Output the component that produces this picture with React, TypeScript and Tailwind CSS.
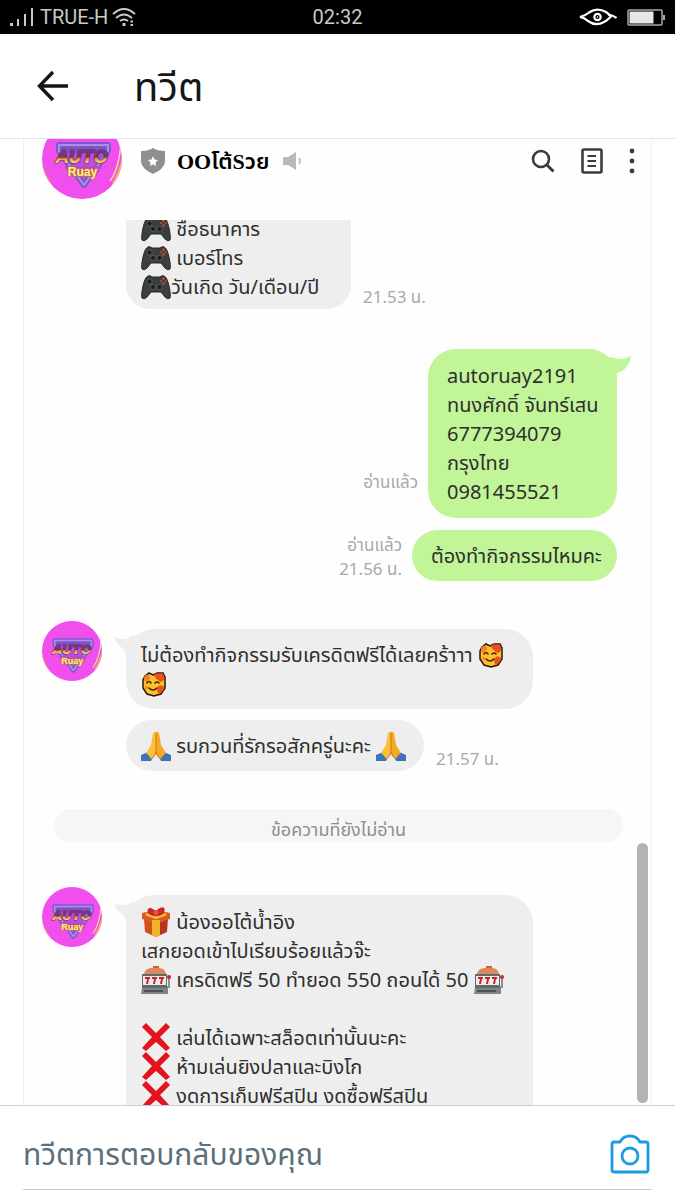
import type { ReactNode } from "react";

function Avatar({ id, className }: { id: string; className: string }) {
  return (
    <svg viewBox="0 0 80 80" className={className} role="img" aria-label="Auto Ruay">
      <defs>
        <clipPath id={`${id}-clip`}>
          <circle cx="40" cy="40" r="40" />
        </clipPath>
        <linearGradient id={`${id}-gold`} x1="0" y1="0" x2="0" y2="1">
          <stop offset="0.3" stopColor="#6a3a8c" />
          <stop offset="0.5" stopColor="#7a3a3c" />
          <stop offset="0.6" stopColor="#f0a04a" />
          <stop offset="0.85" stopColor="#ffe08a" />
        </linearGradient>
      </defs>
      <g clipPath={`url(#${id}-clip)`}>
        <rect width="80" height="80" fill="#f04fee" />
        <path d="M-2 38Q1 52 9 64L-4 62Z" fill="#e8a850" />
        <path d="M83 22Q79 50 70 64L76 64L84 50Z" fill="#f2b45c" />
        <path d="M79 24Q77 50 68 62" fill="none" stroke="#fbd79a" strokeWidth="1.5" />
        <path d="M17 26H66V32L42 66L17 32Z" fill="#c04be0" stroke="#8058cc" strokeWidth="6" strokeLinejoin="round" />
        <path d="M17 26H66V32L42 66L17 32Z" fill="none" stroke="#a294ea" strokeWidth="2" strokeLinejoin="round" />
        <rect x="20" y="28" width="43" height="6" fill="#8a4cc4" />
        <path d="M22 47H60L54 58H30Z" fill="#b848d0" />
        <text x="40" y="44" textAnchor="middle" fontFamily="DejaVu Sans, sans-serif" fontSize="17" fontWeight="700" fontStyle="italic" fill={`url(#${id}-gold)`} stroke="#6a2a60" strokeWidth="1.2" paintOrder="stroke">
          AUTO
        </text>
        <text x="40.5" y="57" textAnchor="middle" fontFamily="Liberation Sans, sans-serif" fontSize="12" fontWeight="700" fill="#fff08a" stroke="#c87048" strokeWidth="1.6" paintOrder="stroke">
          Ruay
        </text>
      </g>
    </svg>
  );
}

function Gamepad() {
  return (
    <svg viewBox="0 0 30 26" className="h-[26px] w-[30px] shrink-0" aria-hidden="true">
      <path d="M7 2Q9 1 11 3H19Q21 1 23 2Q26 3 28 12Q30 21 29 24Q27 26 24 23L20 18H10L6 23Q3 26 1 24Q0 21 2 12Q4 3 7 2Z" fill="#3c3f40" stroke="#242627" />
      <circle cx="8.500" cy="7.500" r="2.600" fill="#1c1e1f" stroke="#606465" strokeWidth="0.800" />
      <circle cx="12" cy="13" r="2.600" fill="#1c1e1f" stroke="#606465" strokeWidth="0.800" />
      <circle cx="18.500" cy="13" r="2.600" fill="#1c1e1f" stroke="#606465" strokeWidth="0.800" />
      <circle cx="22.500" cy="4.800" r="1.200" fill="#c9503c" />
      <circle cx="22.500" cy="9.400" r="1.200" fill="#c9503c" />
      <circle cx="20.200" cy="7.100" r="1.200" fill="#b8442f" />
      <circle cx="24.800" cy="7.100" r="1.200" fill="#b8442f" />
    </svg>
  );
}

function HeartsFace() {
  return (
    <svg viewBox="0 0 26 26" className="h-[26px] w-[26px] shrink-0" aria-hidden="true">
      <path d="M4 5L8 2L12 4L16 2L22 2L24 6V17L20 23L13 25L6 23L2 17V9Z" fill="#fdbf2a" stroke="#2b1609" strokeWidth="1.500" />
      <path d="M13 4Q15 1 18 3Q22 1 23 5Q24 9 20 11Q14 8 13 4Z" fill="#e8501f" />
      <path d="M3 7Q4 3 8 4Q10 6 8 9L4 11Z" fill="#f08424" />
      <path d="M17 16Q19 13 21 15Q24 15 23 18Q21 22 18 23Q15 20 17 16Z" fill="#e8501f" />
      <path d="M4 15Q6 14 7 17L5 19Z" fill="#f08424" />
      <path d="M6 12Q8 9 10 12M14 12Q16 10 18 12M8 17Q12 21 16 17" fill="none" stroke="#4a2208" strokeWidth="1.600" strokeLinecap="round" />
    </svg>
  );
}

function PrayingHands() {
  return (
    <svg viewBox="0 0 30 30" className="h-[30px] w-[30px] shrink-0" aria-hidden="true">
      <path d="M0 24L7 21L12 26L10 30H0Z" fill="#3d73b8" />
      <path d="M30 24L23 21L18 26L20 30H30Z" fill="#3d73b8" />
      <path d="M15 1Q12 0 11.500 5L10 14L5 22Q8 24 10 28Q14 26 15 21Z" fill="#fdbf3a" />
      <path d="M15 1Q18 0 18.500 5L20 14L25 22Q22 24 20 28Q16 26 15 21Z" fill="#f7a823" />
      <path d="M15 2V21Q14 26 10 28M15 21Q16 26 20 28" fill="none" stroke="#c9781c" strokeWidth="1" />
    </svg>
  );
}

function Gift() {
  return (
    <svg viewBox="0 0 30 30" className="h-[30px] w-[30px] shrink-0" aria-hidden="true">
      <path d="M3 11L15 16V30L4 25Z" fill="#d2501c" />
      <path d="M27 11L15 16V30L26 25Z" fill="#b5361a" />
      <path d="M1 6L15 3L29 6V12L15 17L1 12Z" fill="#dc5a20" />
      <path d="M11 13L19 13V28L15 30L11 28Z" fill="#f0b428" />
      <path d="M5 7L15 11L25 7" fill="none" stroke="#f4c13c" strokeWidth="2.500" />
      <path d="M15 8Q8 9 7 4Q7 0 11 2Q14 3 15 6Q16 2 20 1Q24 0 23 4Q22 9 15 8Z" fill="#d4242a" stroke="#9e161c" strokeWidth="0.800" />
      <circle cx="15" cy="5.500" r="2.500" fill="#ee4a48" />
    </svg>
  );
}

function SlotMachine() {
  return (
    <svg viewBox="0 0 30 30" className="h-[30px] w-[30px] shrink-0" aria-hidden="true">
      <path d="M12 1H18V4H12Z" fill="#d0622c" />
      <path d="M3 9Q4 3 11 3H18Q24 3 25 9Z" fill="#dc8a5c" />
      <rect x="1" y="9" width="25" height="14" fill="#5f6b6e" />
      <rect x="2" y="11" width="23" height="9" fill="#f0ebe8" />
      <path d="M4 12H9V14H8L7 19H5L6 14H4ZM11 12H16V14H15L14 19H12L13 14H11ZM18 12H23V14H22L21 19H19L20 14H18Z" fill="#c2272d" />
      <path d="M1 23H27V29H0Z" fill="#7d8587" />
      <path d="M3 26H22" stroke="#4b5557" strokeWidth="2" />
      <path d="M26 22H28V13" fill="none" stroke="#8a9294" strokeWidth="2" />
      <circle cx="28" cy="12" r="2" fill="#d3222a" />
    </svg>
  );
}

function CrossMark() {
  return (
    <svg viewBox="0 0 30 29" className="h-[29px] w-[30px] shrink-0" aria-hidden="true">
      <path d="M5 0L15 10L25 0L29 4L19 14L29 25L25 28L15 19L5 28L1 25L11 14L1 4Z" fill="#e2131c" />
    </svg>
  );
}

function Line({ children }: { children?: ReactNode }) {
  return <p className="flex h-[29px] items-center whitespace-pre">{children}</p>;
}

function Stamp({ read, time }: { read?: boolean; time?: string }) {
  return (
    <div className="text-right text-[17px] leading-6 text-[#a9a9a9]">
      {read && <p>อ่านแล้ว</p>}
      {time && <p>{time}</p>}
    </div>
  );
}

function IncomingTail() {
  return (
    <svg viewBox="0 0 26 20" className="absolute -left-3 top-1.5 h-5 w-[26px]" aria-hidden="true">
      <path d="M0 1Q7 8 20 0L26 8L12 20Q11 14 7 12Q2 9 0 1Z" fill="#eeeeee" />
    </svg>
  );
}

function StatusBar() {
  return (
    <div className="flex h-[34px] shrink-0 items-center bg-black px-2.5 font-['Roboto',sans-serif] text-xl text-[#c9c9c9]">
      <div className="flex flex-1 items-center">
        <svg viewBox="0 0 26 18" className="h-[18px] w-[26px]" fill="#c9c9c9" aria-hidden="true">
          <path d="M0 15H3V18H0ZM7 11H9V18H7ZM14 6H16V18H14ZM21 0H23V18H21Z" />
        </svg>
        <span className="ml-1">TRUE-H</span>
        <svg viewBox="0 0 24 20" className="ml-1 h-5 w-6" fill="none" stroke="#c9c9c9" strokeWidth="2" aria-hidden="true">
          <path d="M1 7Q12 -3 23 7M4 11Q12 4 20 11M8 14Q12 11 16 14" />
          <path d="M10.500 17.500H13.500" strokeWidth="3" />
          <path d="M18.500 14.500H21M18.500 18H21" />
        </svg>
      </div>
      <span>02:32</span>
      <div className="flex flex-1 items-center justify-end gap-2.5">
        <svg viewBox="0 0 38 18" className="h-[18px] w-[38px]" fill="none" stroke="#ffffff" strokeWidth="2.200" aria-hidden="true">
          <path d="M1 9Q6 8 10 4.500Q18 -1 27 4Q30 6 32 8.500Q20 21 9 13Q6 10 1 9Z" />
          <path d="M29 6.500Q34 7 37.500 10" />
          <circle cx="18.500" cy="9" r="3.200" />
          <circle cx="18.500" cy="9" r="0.400" strokeWidth="1" />
        </svg>
        <svg viewBox="0 0 38 17" className="h-[17px] w-[38px]" aria-hidden="true">
          <rect x="1" y="1" width="34" height="15" rx="1" fill="none" stroke="#a8a8a8" strokeWidth="1.500" />
          <rect x="2.500" y="2.500" width="24" height="12" fill="#e6e6e6" />
          <rect x="36" y="6" width="2" height="5" fill="#a8a8a8" />
        </svg>
      </div>
    </div>
  );
}

function ChatHeader() {
  return (
    <div className="flex h-[81px] shrink-0 items-start pl-[18px] pr-3 text-[#3d3d3d]">
      <Avatar id="top" className="-mt-5 size-20" />
      <div className="ml-[19px] flex h-11 flex-1 items-center">
        <svg viewBox="0 0 24 26" className="h-[26px] w-6" aria-hidden="true">
          <path d="M0 3Q8 3 12 0Q16 3 24 3V14Q23 21 12 26Q1 21 0 14Z" fill="#8f8f8f" />
          <path d="M12 8L13.500 11.500L17 12L14.500 14.500L15 18L12 16.300L9 18L9.500 14.500L7 12L10.500 11.500Z" fill="#ffffff" />
        </svg>
        <h2 className="ml-3 flex items-baseline text-[22px] font-semibold leading-7 text-black">
          <span className="font-['Liberation_Serif',serif] font-bold">OO</span>
          <span>โต้</span>
          <span className="font-['Liberation_Serif',serif] font-bold">S</span>
          <span>วย</span>
        </h2>
        <svg viewBox="0 0 20 20" className="ml-3.5 size-5" aria-hidden="true">
          <path d="M0 6H5L13 1V19L5 14H0Z" fill="#b9b9b9" />
          <path d="M16 7Q18 10 16 13" fill="none" stroke="#c4c4c4" strokeWidth="2" />
        </svg>
      </div>
      <div className="flex h-11 items-center">
        <button type="button" aria-label="ค้นหา">
          <svg viewBox="0 0 24 24" className="size-6" fill="none" stroke="currentColor" strokeWidth="2.600" aria-hidden="true">
            <circle cx="10" cy="10" r="8" />
            <path d="M15.500 15.500L22.500 22.500" strokeWidth="3" />
          </svg>
        </button>
        <button type="button" aria-label="โน้ต" className="ml-[26px]">
          <svg viewBox="0 0 22 26" className="h-[26px] w-[22px]" fill="none" stroke="currentColor" strokeWidth="2.600" aria-hidden="true">
            <rect x="1.500" y="1.500" width="19" height="23" rx="1.500" />
            <path d="M6.500 8H15M6.500 13H15M6.500 18H15" strokeWidth="2" />
          </svg>
        </button>
        <button type="button" aria-label="เพิ่มเติม" className="ml-6">
          <svg viewBox="0 0 12 26" className="h-[26px] w-3" fill="currentColor" aria-hidden="true">
            <circle cx="5" cy="3" r="2.400" />
            <circle cx="5" cy="13" r="2.400" />
            <circle cx="5" cy="23" r="2.400" />
          </svg>
        </button>
      </div>
    </div>
  );
}

function Messages() {
  return (
    <div className="min-h-0 flex-1 overflow-hidden pl-[18px] text-xl text-[#2f2f2f]">
      {/* Tail end of the sign-up form */}
      <div className="ml-[84px] flex items-end gap-3">
        <div className="w-[225px] rounded-b-3xl bg-[#eeeeee] px-[15px] pb-2">
          <div className="-mt-1.5">
            <Line><Gamepad /> ชื่อธนาคาร</Line>
          </div>
          <Line><Gamepad /> เบอร์โทร</Line>
          <Line><Gamepad />วันเกิด วัน/เดือน/ปี</Line>
        </div>
        <Stamp time="21.53 น." />
      </div>

      {/* Outgoing */}
      <div className="mr-[34px] mt-10 flex flex-col items-end gap-3">
        <div className="flex items-end gap-2.5">
          <div className="pb-6">
            <Stamp read />
          </div>
          <div className="relative w-[189px] rounded-[28px] bg-[#c1f598] px-[19px] py-3">
            <svg viewBox="0 0 28 20" className="absolute -right-3.5 top-1.5 h-5 w-7" aria-hidden="true">
              <path d="M28 0Q21 7 8 2L0 6L14 18Q26 15 28 0Z" fill="#c1f598" />
            </svg>
            <Line>autoruay2191</Line>
            <Line>ทนงศักดิ์ จันทร์เสน</Line>
            <Line>6777394079</Line>
            <Line>กรุงไทย</Line>
            <Line>0981455521</Line>
          </div>
        </div>
        <div className="flex items-end gap-2.5">
          <Stamp read time="21.56 น." />
          <div className="w-[205px] rounded-[28px] bg-[#c1f598] px-[19px] py-[11px]">
            <Line>ต้องทำกิจกรรมไหมคะ</Line>
          </div>
        </div>
      </div>

      {/* Incoming */}
      <div className="mt-12 flex items-start">
        <Avatar id="reply" className="-mt-2 size-[60px]" />
        <div className="ml-6 flex flex-col gap-[11px]">
          <div className="relative w-[407px] rounded-[28px] bg-[#eeeeee] px-[15px] py-[11px]">
            <IncomingTail />
            <Line>ไม่ต้องทำกิจกรรมรับเครดิตฟรีได้เลยคร้าาา <HeartsFace /></Line>
            <Line><HeartsFace /></Line>
          </div>
          <div className="flex items-end gap-3">
            <div className="w-[298px] rounded-[28px] bg-[#eeeeee] px-[15px] py-[11px]">
              <Line><PrayingHands /> รบกวนที่รักรอสักครู่นะคะ <PrayingHands /></Line>
            </div>
            <Stamp time="21.57 น." />
          </div>
        </div>
      </div>

      <p className="ml-3 mr-7 mt-[38px] h-[33px] rounded-2xl bg-[#f6f6f6] pt-1 text-center text-lg leading-8 text-[#8e8e8e]">
        ข้อความที่ยังไม่อ่าน
      </p>

      <div className="mt-[53px] flex items-start">
        <Avatar id="unread" className="-mt-2 size-[60px]" />
        <div className="relative ml-6 w-[407px] rounded-t-[28px] bg-[#eeeeee] px-[15px] py-3">
          <IncomingTail />
          <Line><Gift /> น้องออโต้น้ำอิง</Line>
          <Line>เสกยอดเข้าไปเรียบร้อยแล้วจ๊ะ</Line>
          <Line><SlotMachine /> เครดิตฟรี 50 ทำยอด 550 ถอนได้ 50 <SlotMachine /></Line>
          <Line />
          <Line><CrossMark /> เล่นได้เฉพาะสล็อตเท่านั้นนะคะ</Line>
          <Line><CrossMark /> ห้ามเล่นยิงปลาและบิงโก</Line>
          <Line><CrossMark /> งดการเก็บฟรีสปิน งดซื้อฟรีสปิน</Line>
        </div>
      </div>
    </div>
  );
}

export default function App() {
  return (
    <div className="flex h-screen flex-col overflow-hidden bg-white font-['Noto_Sans','Noto_Sans_Thai',sans-serif]">
      <StatusBar />

      <header className="flex h-[105px] shrink-0 items-center border-b border-[#e1e4e6] pl-9 text-[#14171a]">
        <button type="button" aria-label="ย้อนกลับ">
          <svg viewBox="0 0 34 32" className="h-8 w-[34px]" fill="none" stroke="currentColor" strokeWidth="3.400" aria-hidden="true">
            <path d="M32 16H4M17 2L3.500 16L17 30" />
          </svg>
        </button>
        <h1 className="ml-16 text-[40px] leading-[56px]">ทวีต</h1>
      </header>

      <main className="relative mx-[23px] flex min-h-0 flex-1 flex-col overflow-hidden border-x border-[#f1f1f1] bg-[#fefefe]">
        <ChatHeader />
        <Messages />
        <div className="absolute bottom-0.5 right-[3px] h-[260px] w-[11px] rounded-full bg-[#b3b3b3]" />
      </main>

      <footer className="shrink-0 border-t border-[#c9d0d4] px-[23px] pb-2.5">
        <form className="flex h-[84px] items-center border-b border-[#c3ccd0] pt-3">
          <input
            type="text"
            aria-label="ทวีตการตอบกลับของคุณ"
            placeholder="ทวีตการตอบกลับของคุณ"
            className="h-14 min-w-0 flex-1 text-[30px] outline-none placeholder:text-[#5c6f7c]"
          />
          <button type="button" aria-label="กล้อง" className="mr-0.5">
            <svg viewBox="0 0 40 40" className="size-10" fill="none" stroke="#1d9be2" strokeWidth="2.800" strokeLinejoin="round" aria-hidden="true">
              <path d="M4 8H10Q13 2 20 2Q27 2 30 8H36Q38 8 38 10V36Q38 38 36 38H4Q2 38 2 36V10Q2 8 4 8Z" />
              <circle cx="20" cy="22" r="8" />
            </svg>
          </button>
        </form>
      </footer>
    </div>
  );
}
